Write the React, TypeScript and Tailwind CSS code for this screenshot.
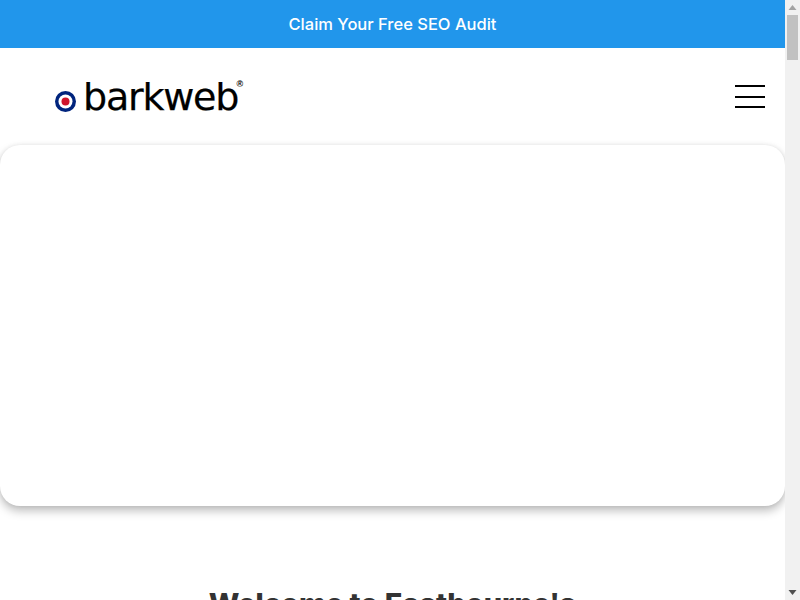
import React from 'react';

const Logo: React.FC = () => (
  <div className="flex items-center">
    <svg width="21" height="21" viewBox="0 0 21 21" className="mt-[9px] shrink-0">
      <circle cx="10.5" cy="10.5" r="10.5" fill="#00247d" />
      <circle cx="10.5" cy="10.5" r="7" fill="#ffffff" />
      <circle cx="10.5" cy="10.5" r="4" fill="#cf142b" />
    </svg>
    <span className="relative ml-[7px] font-['DejaVu_Sans',sans-serif] text-[38px] leading-none text-black tracking-[-1.2px] [-webkit-text-stroke:0.25px_black]">
      barkweb
      <span className="absolute -right-[5px] top-[2px] font-['Liberation_Sans',sans-serif] text-[9px] font-bold leading-none tracking-normal [-webkit-text-stroke:0]">®</span>
    </span>
  </div>
);

const Scrollbar: React.FC = () => (
  <div className="flex w-[15px] shrink-0 flex-col items-center bg-[#f1f1f1]">
    <svg width="9" height="15" viewBox="0 0 9 15" className="shrink-0">
      <path d="M4.5 5 L8.5 10 L0.5 10 Z" fill="#a3a3a3" />
    </svg>
    <div className="h-[45px] w-[11px] bg-[#c1c1c1]" />
    <svg width="9" height="15" viewBox="0 0 9 15" className="mt-auto shrink-0">
      <path d="M0.5 5 L8.5 5 L4.5 10 Z" fill="#505050" />
    </svg>
  </div>
);

export default function App() {
  return (
    <div className="flex h-[600px] overflow-hidden bg-white font-['Inter',sans-serif]">
      <main className="min-w-0 flex-1">
        <a className="flex h-12 items-center justify-center bg-[#2196eb] text-[16.5px] font-medium text-white">
          Claim Your Free SEO Audit
        </a>

        <header className="flex h-[97px] items-center justify-between pl-[55px] pr-5">
          <Logo />
          <button className="flex w-[30px] flex-col">
            <span className="mb-[9px] h-[2px] bg-black" />
            <span className="mb-[8px] h-[2px] bg-black" />
            <span className="h-[2px] bg-black" />
          </button>
        </header>

        <section className="h-[361px] rounded-[20px] bg-white shadow-[0_0_4px_rgba(0,0,0,0.08),0_5px_10px_rgba(0,0,0,0.25)]" />

        <h1 className="mt-[80px] text-center text-[29px] leading-tight font-extrabold text-[#333333]">
          Welcome to Eastbourne's
        </h1>
      </main>
      <Scrollbar />
    </div>
  );
}
